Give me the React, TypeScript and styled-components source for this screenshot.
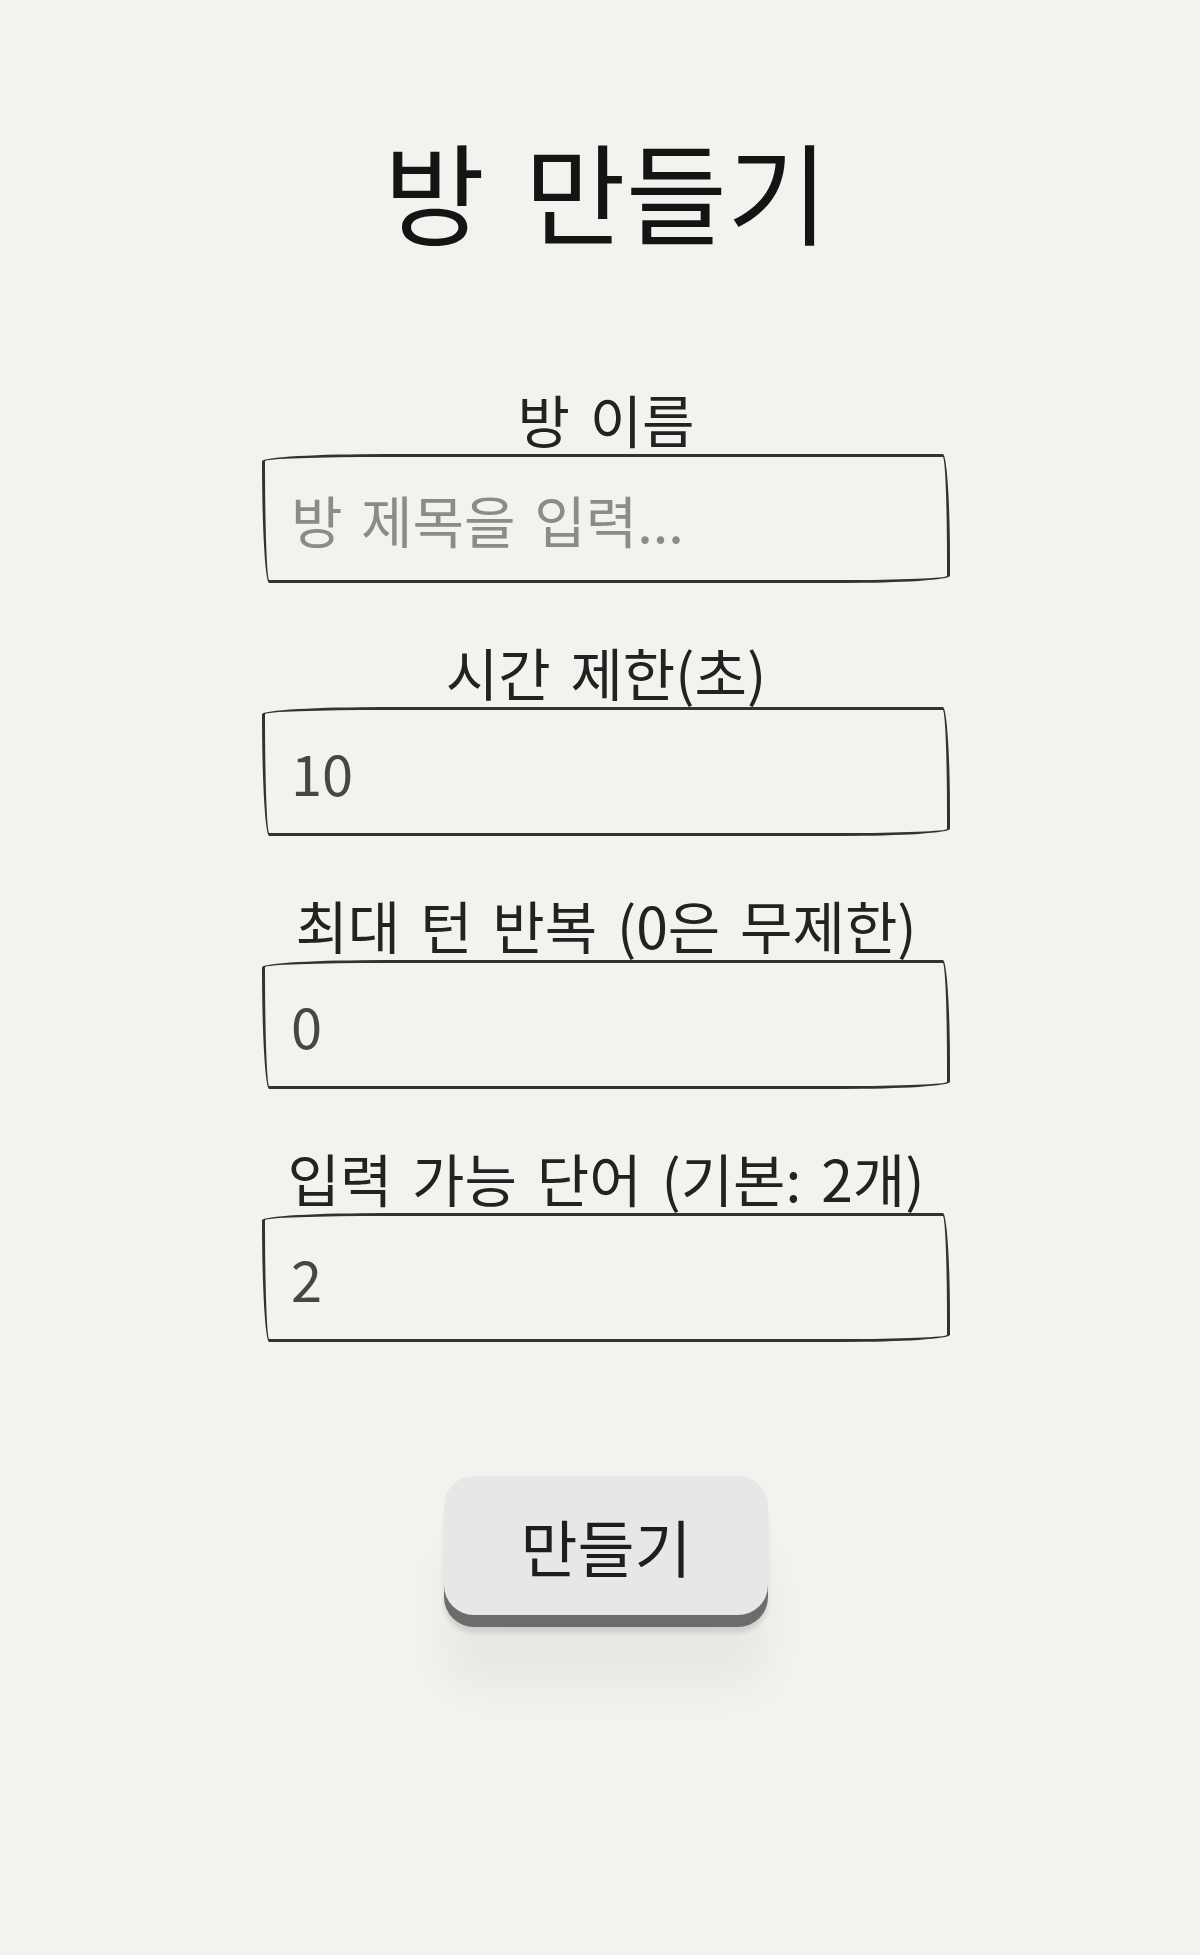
import React, { useState } from 'react';
import styled, { createGlobalStyle } from 'styled-components';

const GlobalStyle = createGlobalStyle`
  html, body {
    margin: 0;
    padding: 0;
    background: #f3f2ee;
  }
  body {
    font-family: "Noto Sans CJK KR", "Noto Sans", sans-serif;
    color: #1c1c1c;
  }
`;

const Page = styled.main`
  min-height: 1955px;
  box-sizing: border-box;
  padding: 123px 0 0 12px;
  display: flex;
  flex-direction: column;
  align-items: center;
`;

const Title = styled.h1`
  margin: 0;
  font-size: 110px;
  font-weight: 400;
  line-height: 1.2;
  color: #141414;
  word-spacing: 15px;
`;

const Form = styled.form`
  width: 688px;
  margin-top: 131px;
  display: flex;
  flex-direction: column;
  gap: 56px;
`;

const Field = styled.div`
  display: flex;
  flex-direction: column;
  align-items: center;
`;

const Label = styled.label`
  display: block;
  font-size: 57px;
  line-height: 65px;
  word-spacing: 7px;
  color: #222;
  white-space: nowrap;
  margin-bottom: 3px;
`;

const Input = styled.input`
  width: 100%;
  box-sizing: border-box;
  padding: 0 26px;
  font-family: inherit;
  font-size: 56px;
  line-height: 1.2;
  word-spacing: 6px;
  height: 129px;
  color: #464646;
  background: transparent;
  border: 3px solid #333230;
  border-radius: 255px 15px 225px 15px / 15px 225px 15px 255px;
  outline: none;

  &::placeholder {
    color: #8c8b89;
  }
`;

const Submit = styled.button`
  margin-top: 134px;
  width: 324px;
  height: 139px;
  font-family: inherit;
  font-size: 62px;
  line-height: 1;
  color: #1e1e1e;
  background: #e7e7e7;
  border: none;
  border-radius: 30px;
  cursor: pointer;
  box-shadow:
    0 12px 0 #6c6c6c,
    0 18px 4px rgba(0, 0, 0, 0.1),
    0 72px 45px rgba(0, 0, 0, 0.045);
`;

const fields = [
  { id: 'name', label: '방 이름', placeholder: '방 제목을 입력...', initial: '' },
  { id: 'time', label: '시간 제한(초)', placeholder: '', initial: '10' },
  { id: 'turns', label: '최대 턴 반복 (0은 무제한)', placeholder: '', initial: '0' },
  { id: 'words', label: '입력 가능 단어 (기본: 2개)', placeholder: '', initial: '2' },
];

const App = () => {
  const [values, setValues] = useState<Record<string, string>>(
    Object.fromEntries(fields.map(f => [f.id, f.initial]))
  );

  const handleChange = (id: string) => (e: React.ChangeEvent<HTMLInputElement>) => {
    const value = e.target.value;
    setValues(curr => ({ ...curr, [id]: value }));
  };

  return (
    <>
      <GlobalStyle />
      <Page>
        <Title>방 만들기</Title>
        <Form onSubmit={e => e.preventDefault()}>
          {fields.map(f => (
            <Field key={f.id}>
              <Label htmlFor={f.id}>{f.label}</Label>
              <Input
                id={f.id}
                value={values[f.id]}
                placeholder={f.placeholder}
                onChange={handleChange(f.id)}
              />
            </Field>
          ))}
        </Form>
        <Submit type="button">만들기</Submit>
      </Page>
    </>
  );
};

export default App;
